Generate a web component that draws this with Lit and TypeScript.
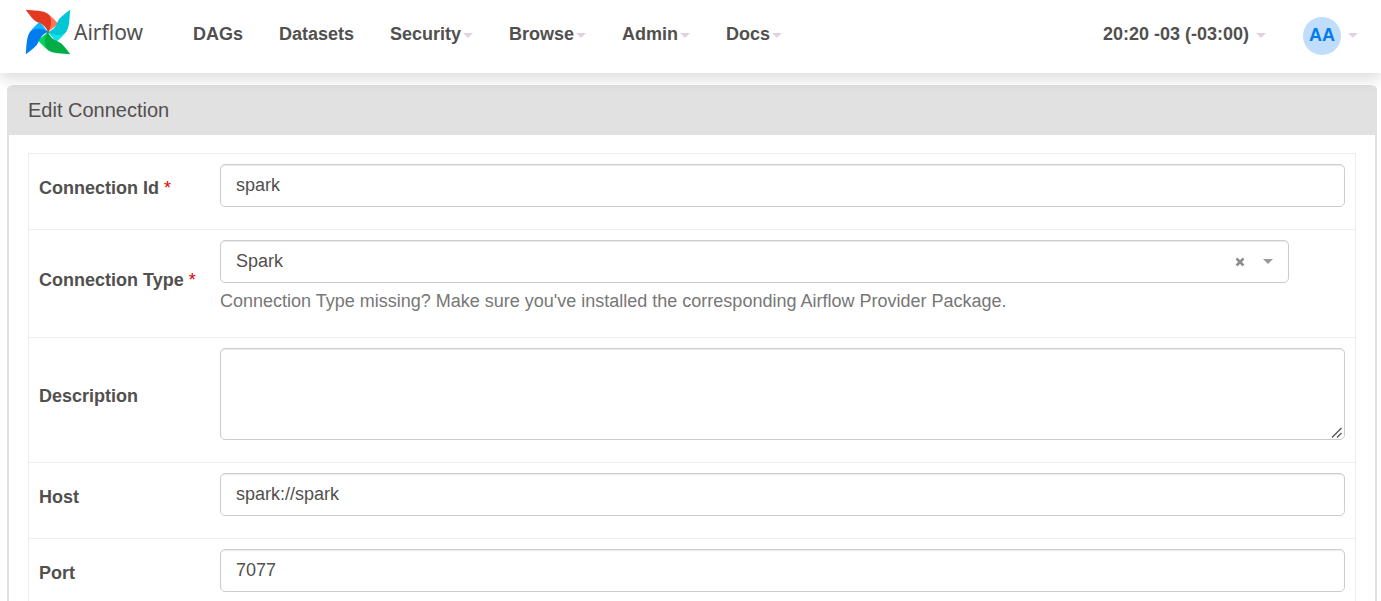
import { LitElement, html, css, svg } from "lit";
import { customElement, property } from "lit/decorators.js";

const BLADES = [
  { angle: 0, main: "#e43921", light: "#ff7557" },
  { angle: 90, main: "#00c7d4", light: "#11e1ee" },
  { angle: 180, main: "#00ad46", light: "#04d659" },
  { angle: 270, main: "#017cee", light: "#0cb6ff" },
];

const NAV = [
  { label: "DAGs", menu: false },
  { label: "Datasets", menu: false },
  { label: "Security", menu: true },
  { label: "Browse", menu: true },
  { label: "Admin", menu: true },
  { label: "Docs", menu: true },
];

@customElement("airflow-logo")
class AirflowLogo extends LitElement {
  static styles = css`
    :host {
      display: flex;
      align-items: center;
      gap: 3px;
      color: #51504f;
      font: 21px/28px "Noto Sans", sans-serif;
    }
    .pinwheel {
      display: block;
      width: 46px;
      height: 46px;
    }
  `;

  render() {
    return html`
      <svg class="pinwheel" viewBox="77 27.5 138 138" aria-hidden="true">
        ${BLADES.map(
          (b) => svg`<g transform="rotate(${b.angle} 146 96.5)">
            <path fill=${b.light} d="M147 44C158 50 166 60 175 70C169 81 156 86 146 97Z" />
            <path fill=${b.main} d="M79 30C100 32 136 31 149 45C159 62 157 80 146 97C140 80 130 74 118 69C100 62 92 46 79 30Z" />
          </g>`
        )}
        <circle cx="146" cy="96.5" r="2.4" fill="#51504f" />
      </svg>
      <span>Airflow</span>
    `;
  }
}

@customElement("nav-bar")
class NavBar extends LitElement {
  static styles = css`
    :host {
      display: block;
      position: relative;
      z-index: 1;
      background: #fff;
      box-shadow: 0 5px 15px rgba(0, 0, 0, 0.15);
    }
    .bar {
      display: flex;
      align-items: center;
      height: 73px;
      padding: 0 23px 0 25px;
      box-sizing: border-box;
    }
    .brand,
    .item {
      text-decoration: none;
    }
    .brand {
      margin-top: -9px;
    }
    .links {
      display: flex;
      flex: 1;
      gap: 36px;
      margin: 0 0 0 50px;
      padding: 0;
      list-style: none;
    }
    .links,
    .clock {
      padding-bottom: 5px;
    }
    .item {
      display: flex;
      align-items: center;
      gap: 2px;
      padding: 0;
      border: 0;
      background: none;
      color: #51504f;
      font: bold 18px/24px "Liberation Sans", Arial, sans-serif;
      white-space: nowrap;
    }
    .spaced {
      gap: 7px;
    }
    .user {
      margin-left: 37px;
      margin-bottom: 2px;
    }
    .caret {
      border: 5px solid transparent;
      border-top-color: #e3d2e4;
      border-bottom: 0;
      margin-top: 3px;
    }
    .user .caret {
      margin-top: 0;
    }
    .avatar {
      width: 38px;
      height: 38px;
      border-radius: 50%;
      background: #c0ddfb;
      color: #017cee;
      line-height: 36px;
      text-align: center;
    }
  `;

  render() {
    const caret = html`<span class="caret"></span>`;
    return html`
      <nav class="bar">
        <a class="brand" href="#home"><airflow-logo></airflow-logo></a>
        <ul class="links">
          ${NAV.map(
            (n) => html`<li><a class="item" href="#${n.label}">${n.label}${n.menu ? caret : ""}</a></li>`
          )}
        </ul>
        <div class="clock"><button class="item spaced" type="button">20:20 -03 (-03:00)${caret}</button></div>
        <div class="user">
          <button class="item spaced" type="button"><span class="avatar">AA</span>${caret}</button>
        </div>
      </nav>
    `;
  }
}

@customElement("connection-form")
class ConnectionForm extends LitElement {
  @property() heading = "Edit Connection";

  static styles = css`
    :host {
      display: block;
      margin: 12px 4px 20px 7px;
    }
    .panel {
      border: 2px solid #e1e1e1;
      border-top: 0;
      border-radius: 5px;
      background: #fff;
    }
    .heading {
      margin: 0;
      padding: 13px 19px 12px;
      border-radius: 5px 5px 0 0;
      background: #e1e1e1;
      font-size: 20px;
      font-weight: normal;
      line-height: 25px;
    }
    .fields {
      margin: 18px 19px;
      border: 1px solid #eee;
      border-bottom: 0;
    }
    .row {
      display: grid;
      grid-template-columns: 181px 1fr;
      align-items: center;
      padding: 10px 10px 22px;
      border-bottom: 1px solid #eee;
    }
    .label {
      margin-top: 5px;
      font-weight: bold;
      line-height: 25px;
    }
    .required {
      color: #e60000;
      font-weight: normal;
    }
    .control {
      display: block;
      box-sizing: border-box;
      width: 100%;
      height: 43px;
      margin: 0;
      padding: 0 15px;
      border: 1px solid #ccc;
      border-radius: 5px;
      background: #fff;
      box-shadow: inset 0 1px 1px rgba(0, 0, 0, 0.08);
      color: #51504f;
      font: 18px/25px "Liberation Sans", Arial, sans-serif;
    }
    .area {
      height: 92px;
      padding: 8px 15px;
      resize: vertical;
    }
    .area::-webkit-resizer {
      background: url("data:image/svg+xml,%3Csvg xmlns='http://www.w3.org/2000/svg' width='15' height='15'%3E%3Cpath d='M3 13.5L12.5 4M8 13.5L12.5 9' stroke='%23555' stroke-width='1.4'/%3E%3C/svg%3E")
        no-repeat right bottom;
    }
    .picker {
      display: grid;
      align-items: center;
      width: 95%;
    }
    .picker > * {
      grid-area: 1 / 1;
    }
    .select {
      appearance: none;
    }
    .tools {
      display: flex;
      align-items: center;
      justify-self: end;
      gap: 18px;
      margin-right: 16px;
      pointer-events: none;
    }
    .clear {
      display: block;
      padding: 0;
      border: 0;
      background: none;
      pointer-events: auto;
    }
    .cross {
      display: block;
      width: 10px;
      height: 10px;
    }
    .caret {
      border: 5px solid transparent;
      border-top-color: #999;
      border-bottom: 0;
    }
    .help {
      margin: 6px 0 1px;
      color: #777;
      line-height: 25px;
    }
  `;

  private label(id: string, text: string, required = false) {
    return html`<label class="label" for=${id}
      >${text}${required ? html` <span class="required">*</span>` : ""}</label
    >`;
  }

  private textRow(id: string, text: string, value: string, required = false) {
    return html`<div class="row">
      ${this.label(id, text, required)}
      <input class="control" id=${id} type="text" .value=${value} ?required=${required} />
    </div>`;
  }

  render() {
    return html`
      <section class="panel">
        <h1 class="heading">${this.heading}</h1>
        <form class="fields">
          ${this.textRow("conn-id", "Connection Id", "spark", true)}
          <div class="row">
            ${this.label("conn-type", "Connection Type", true)}
            <div>
              <div class="picker">
                <select class="control select" id="conn-type" required>
                  <option>Spark</option>
                </select>
                <div class="tools">
                  <button class="clear" type="button" aria-label="Clear connection type">
                    <svg class="cross" viewBox="0 0 10 10">
                      <path d="M1.5 1.5L8.5 8.5M8.5 1.5L1.5 8.5" stroke="#8c8c8c" stroke-width="2.5" />
                    </svg>
                  </button>
                  <span class="caret"></span>
                </div>
              </div>
              <p class="help">
                Connection Type missing? Make sure you've installed the corresponding Airflow Provider Package.
              </p>
            </div>
          </div>
          <div class="row">
            ${this.label("description", "Description")}
            <textarea class="control area" id="description"></textarea>
          </div>
          ${this.textRow("host", "Host", "spark://spark")}
          ${this.textRow("port", "Port", "7077")}
        </form>
      </section>
    `;
  }
}

@customElement("app-root")
class AppRoot extends LitElement {
  static styles = css`
    :host {
      display: block;
      min-height: 100vh;
      background: #fff;
      color: #51504f;
      font: 18px/25px "Liberation Sans", Arial, sans-serif;
    }
  `;

  render() {
    return html`
      <nav-bar></nav-bar>
      <connection-form></connection-form>
    `;
  }
}
